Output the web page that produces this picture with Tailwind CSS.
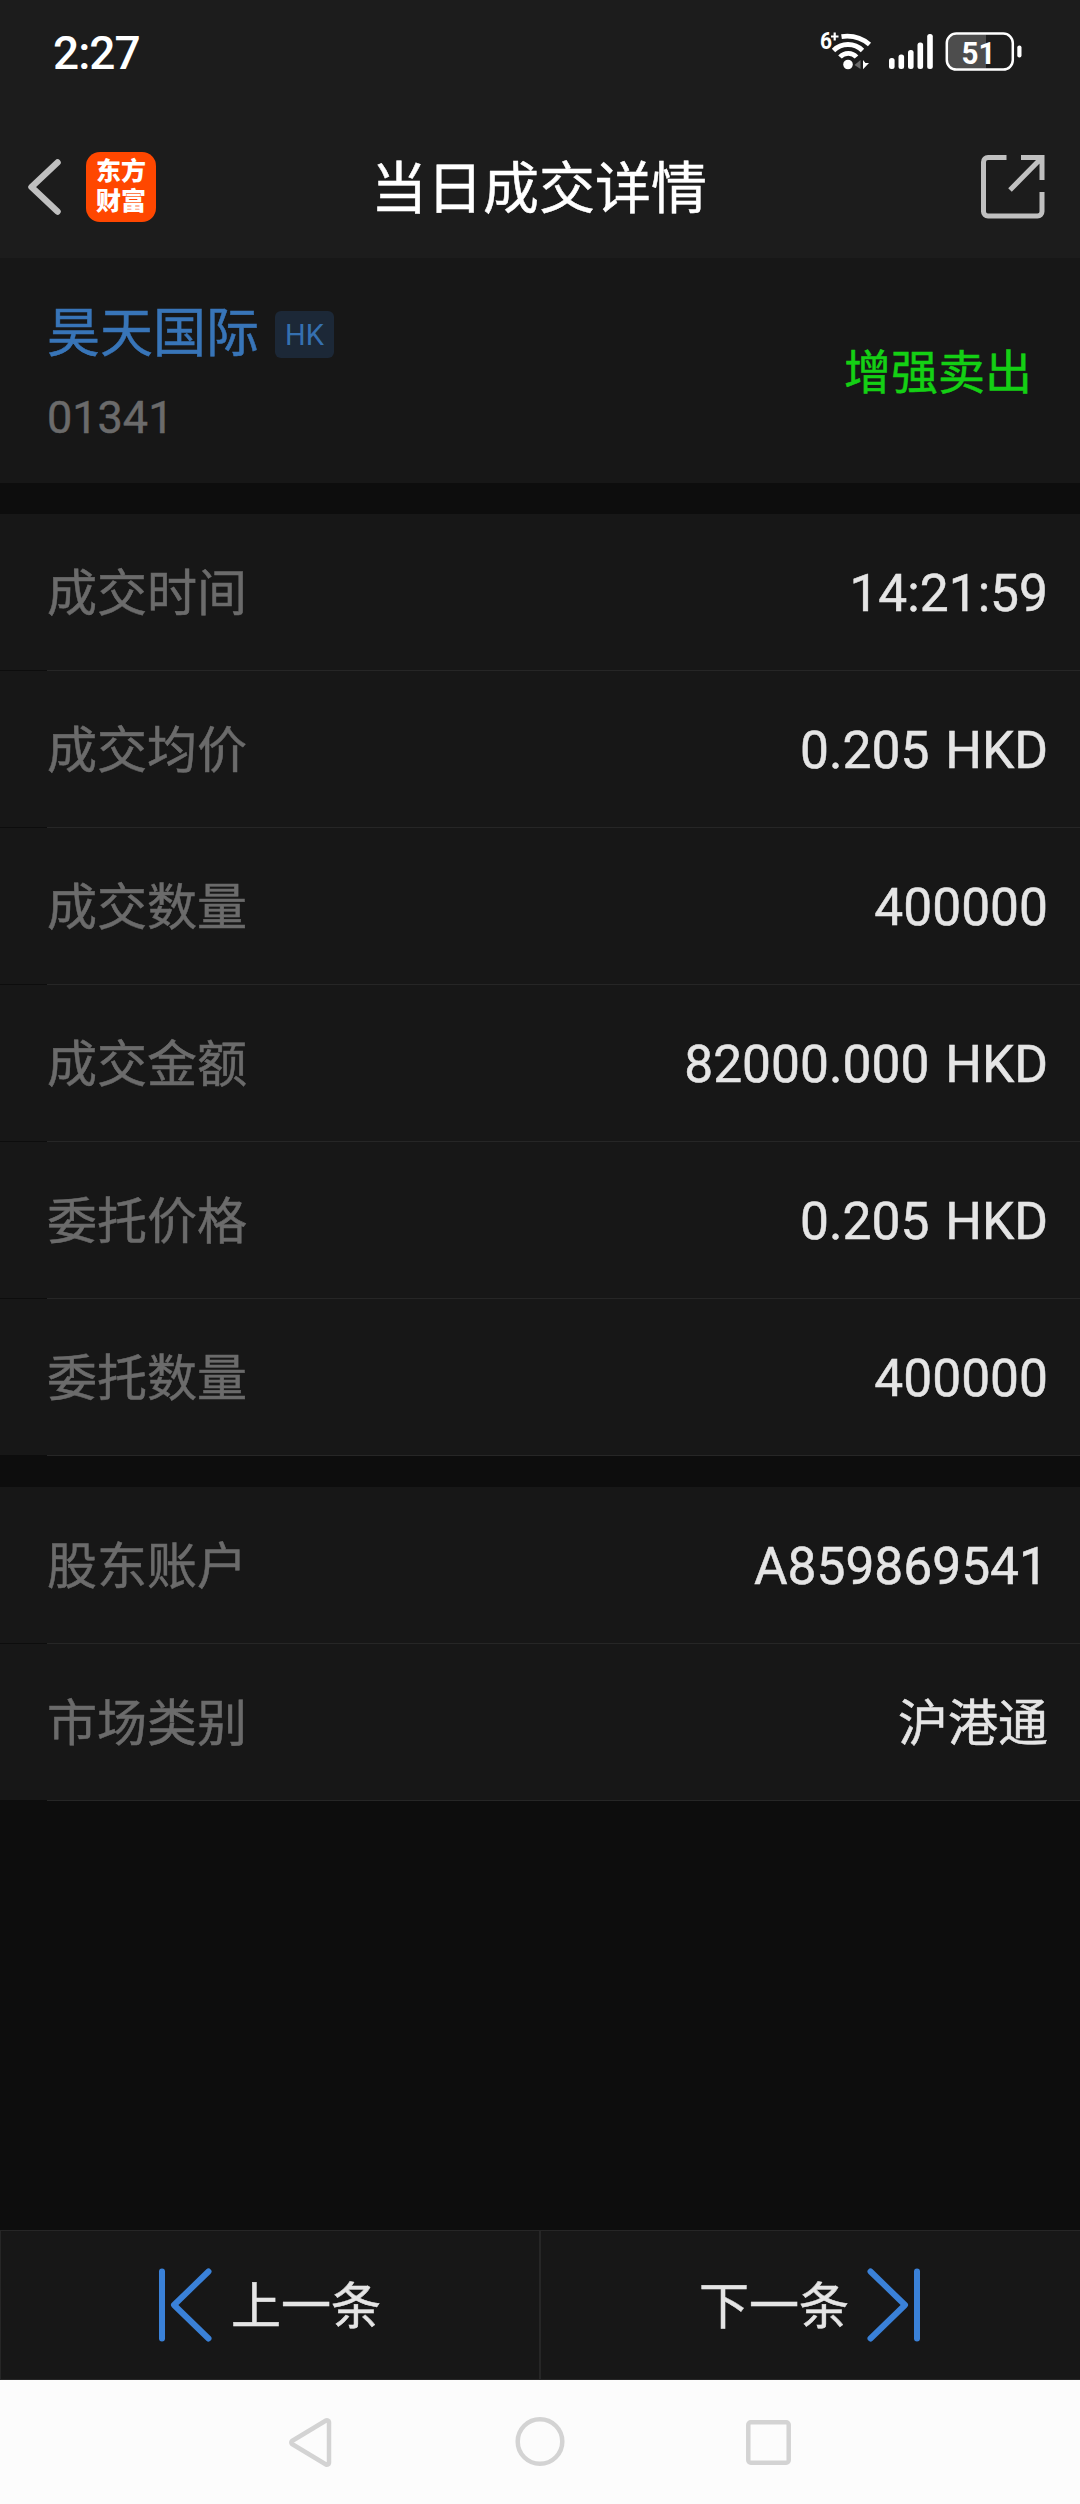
<!DOCTYPE html>
<html lang="zh-CN">
<head>
    <meta charset="UTF-8">
    <meta name="viewport" content="width=device-width, initial-scale=1.0">
    <title>当日成交详情</title>
    <script src="https://cdn.jsdelivr.net/npm/@tailwindcss/browser@4"></script>
</head>
<body class="bg-[#0d0d0d] font-[Roboto,'Noto_Sans_CJK_SC',sans-serif] text-[#e5e5e5]">
    <div class="w-[1080px] h-[2504px] flex flex-col overflow-hidden">
        <!-- Status bar -->
        <div class="h-[104px] shrink-0 bg-[#1c1c1c] flex items-center justify-between pl-[53px] pr-[56px] text-white">
            <span class="text-[46px] leading-[104px] font-medium tracking-[-1px] pt-[2px]">2:27</span>
            <svg class="w-[204px] h-[104px]" viewBox="820 0 204 104" fill="none">
                <text x="820" y="49" font-size="23" font-weight="700" fill="#fff" textLength="12" lengthAdjust="spacingAndGlyphs">6</text>
                <path d="M831 36.500h7.500M834.700 32.500v8" stroke="#fff" stroke-width="2.200"/>
                <circle cx="848" cy="64.500" r="4.800" fill="#fff"/>
                <path d="M840 57a11 11 0 0 1 16.500 0M833.500 50.500a20.500 20.500 0 0 1 29 0" stroke="#fff" stroke-width="4.800"/>
                <path d="M841.500 36.600c10.500-1.500 20.500 1.500 28 7.900" stroke="#fff" stroke-width="4.800"/>
                <path d="M860.500 60v9l-6-4z" fill="#6a6a6a"/>
                <path d="M863 60v9.200l6-6.200h-3.500z" fill="#fff"/>
                <g fill="#fff">
                    <rect x="889" y="58" width="5.600" height="11" rx="2.500"/>
                    <rect x="898.500" y="54.500" width="5.600" height="14.500" rx="2.500"/>
                    <rect x="908" y="50" width="5.600" height="19" rx="2.500"/>
                    <rect x="917.500" y="42.500" width="5.600" height="26.500" rx="2.500"/>
                    <rect x="927.200" y="34" width="5.600" height="35" rx="2.500"/>
                    <rect x="1017.300" y="45.500" width="4.200" height="12" rx="2"/>
                </g>
                <path d="M986 34.500h-30a8 8 0 0 0-8 8v18a8 8 0 0 0 8 8h30z" fill="#4d4d4d"/>
                <rect x="946.800" y="33.600" width="66" height="36" rx="9.500" stroke="#fff" stroke-width="2.500"/>
                <text x="961.500" y="64" font-size="32" font-weight="700" fill="#fff" textLength="34" lengthAdjust="spacingAndGlyphs">51</text>
            </svg>
        </div>

        <!-- Title bar -->
        <div class="h-[154px] shrink-0 bg-[#1c1c1c] grid grid-cols-[1fr_auto_1fr]">
            <div class="flex pl-[27px] pt-[48px] gap-[24px]">
                <svg class="w-[35px] h-[70px]" viewBox="0 0 35 70" fill="none" stroke="#c0c0c0" stroke-width="6.500" stroke-linecap="round" stroke-linejoin="round">
                    <path d="M30.500 10.500L4.500 35l26 24.500"/>
                </svg>
                <div class="size-[70px] rounded-[14px] bg-[#ff4700] text-white text-[25px] leading-[30px] font-black text-center pt-[5px]">
                    <div>东方</div>
                    <div>财富</div>
                </div>
            </div>
            <h1 class="leading-[154px] text-[56px] text-white pt-[8px] -ml-[2px] [-webkit-text-stroke:0.5px]">当日成交详情</h1>
            <div class="flex justify-end pr-[35px] pt-[50px]">
                <svg class="size-[65px]" viewBox="0 0 65 65" fill="none" stroke="#c0c0c0" stroke-width="5">
                    <path d="M26.500 3.500H8a4.500 4.500 0 0 0-4.500 4.500v49.500A4.500 4.500 0 0 0 8 62h49.500a4.500 4.500 0 0 0 4.500-4.500V38"/>
                    <path d="M41 3.500H62V26M61 4.500L30 36"/>
                </svg>
            </div>
        </div>

        <!-- Stock -->
        <div class="h-[225px] shrink-0 bg-[#171717] flex justify-between pl-[47px] pr-[48px] [-webkit-text-stroke:0.5px]">
            <div class="pt-[40px]">
                <div class="flex items-center h-[72px]">
                    <span class="text-[53px] text-[#3875b8] pt-[2px]">昊天国际</span>
                    <span class="ml-[16px] mt-[1px] w-[59px] h-[47px] rounded-[6px] bg-[#1c2837] text-[29px] leading-[49px] text-center text-[#3570b0] [-webkit-text-stroke:0px]">HK</span>
                </div>
                <div class="text-[45px] leading-[60px] mt-[18px] text-[#6b6b6b]">01341</div>
            </div>
            <div class="text-[47px] leading-[225px] pt-[2px] text-[#14d014]">增强卖出</div>
        </div>

        <!-- Deal -->
        <div class="mt-[31px] shrink-0 text-[50px] leading-[160px] [word-spacing:3px] [-webkit-text-stroke:0.5px]">
            <div class="h-[157px]">
                <div class="flex justify-between bg-[#171717] pl-[47px] pr-[32px] h-[156px]"><span class="text-[#6b6b6b]">成交时间</span><span class="text-[51.500px]">14:21:59</span></div>
                <div class="ml-[47px] h-px bg-[#262626]"></div>
            </div>
            <div class="h-[157px]">
                <div class="flex justify-between bg-[#171717] pl-[47px] pr-[32px] h-[156px]"><span class="text-[#6b6b6b]">成交均价</span><span class="text-[51.500px]">0.205 HKD</span></div>
                <div class="ml-[47px] h-px bg-[#262626]"></div>
            </div>
            <div class="h-[157px]">
                <div class="flex justify-between bg-[#171717] pl-[47px] pr-[32px] h-[156px]"><span class="text-[#6b6b6b]">成交数量</span><span class="text-[51.500px]">400000</span></div>
                <div class="ml-[47px] h-px bg-[#262626]"></div>
            </div>
            <div class="h-[157px]">
                <div class="flex justify-between bg-[#171717] pl-[47px] pr-[32px] h-[156px]"><span class="text-[#6b6b6b]">成交金额</span><span class="text-[51.500px]">82000.000 HKD</span></div>
                <div class="ml-[47px] h-px bg-[#262626]"></div>
            </div>
            <div class="h-[157px]">
                <div class="flex justify-between bg-[#171717] pl-[47px] pr-[32px] h-[156px]"><span class="text-[#6b6b6b]">委托价格</span><span class="text-[51.500px]">0.205 HKD</span></div>
                <div class="ml-[47px] h-px bg-[#262626]"></div>
            </div>
            <div class="h-[157px]">
                <div class="flex justify-between bg-[#171717] pl-[47px] pr-[32px] h-[156px]"><span class="text-[#6b6b6b]">委托数量</span><span class="text-[51.500px]">400000</span></div>
                <div class="ml-[47px] h-px bg-[#262626]"></div>
            </div>
        </div>

        <!-- Account -->
        <div class="mt-[31px] shrink-0 text-[50px] leading-[160px] [-webkit-text-stroke:0.5px]">
            <div class="h-[157px]">
                <div class="flex justify-between bg-[#171717] pl-[47px] pr-[32px] h-[156px]"><span class="text-[#6b6b6b]">股东账户</span><span class="text-[51.500px]">A859869541</span></div>
                <div class="ml-[47px] h-px bg-[#262626]"></div>
            </div>
            <div class="h-[157px]">
                <div class="flex justify-between bg-[#171717] pl-[47px] pr-[32px] h-[156px]"><span class="text-[#6b6b6b]">市场类别</span><span>沪港通</span></div>
                <div class="ml-[47px] h-px bg-[#262626]"></div>
            </div>
        </div>

        <!-- Prev / next -->
        <div class="mt-auto h-[150px] shrink-0 bg-[#171717] border-y border-l border-[#262626] flex text-[50px] leading-[148px] [-webkit-text-stroke:0.5px]">
            <div class="w-[540px] border-r-2 border-[#262626] flex items-center pl-[157px]">
                <svg class="w-[54px] h-[74px] mr-[19px]" viewBox="0 0 54 74" fill="none" stroke="#3a81d8" stroke-width="6" stroke-linecap="round" stroke-linejoin="round">
                    <path d="M4 3.500v67M50.500 3.500L16 37l34.500 33.500"/>
                </svg>
                <span class="pt-[3px]">上一条</span>
            </div>
            <div class="flex-1 flex items-center pl-[158px]">
                <span class="pt-[3px]">下一条</span>
                <svg class="w-[54px] h-[74px] ml-[18px]" viewBox="0 0 54 74" fill="none" stroke="#3a81d8" stroke-width="6" stroke-linecap="round" stroke-linejoin="round">
                    <path d="M50 3.500v67M3.500 3.500L38 37 3.500 70.500"/>
                </svg>
            </div>
        </div>

        <!-- System navigation -->
        <div class="h-[124px] shrink-0 bg-[#fcfcfc]">
            <svg class="w-[1080px] h-[124px]" viewBox="0 0 1080 124" fill="none" stroke="#d3d3d3" stroke-width="4.500" stroke-linejoin="round">
                <path d="M326 40.500a2 2 0 0 1 3 1.500v41a2 2 0 0 1-3 1.500l-34-20.500a2 2 0 0 1 0-3z"/>
                <circle cx="540" cy="61.500" r="22.300"/>
                <rect x="748.300" y="42.300" width="40.400" height="40.400" rx="2.500"/>
            </svg>
        </div>
    </div>
</body>
</html>
